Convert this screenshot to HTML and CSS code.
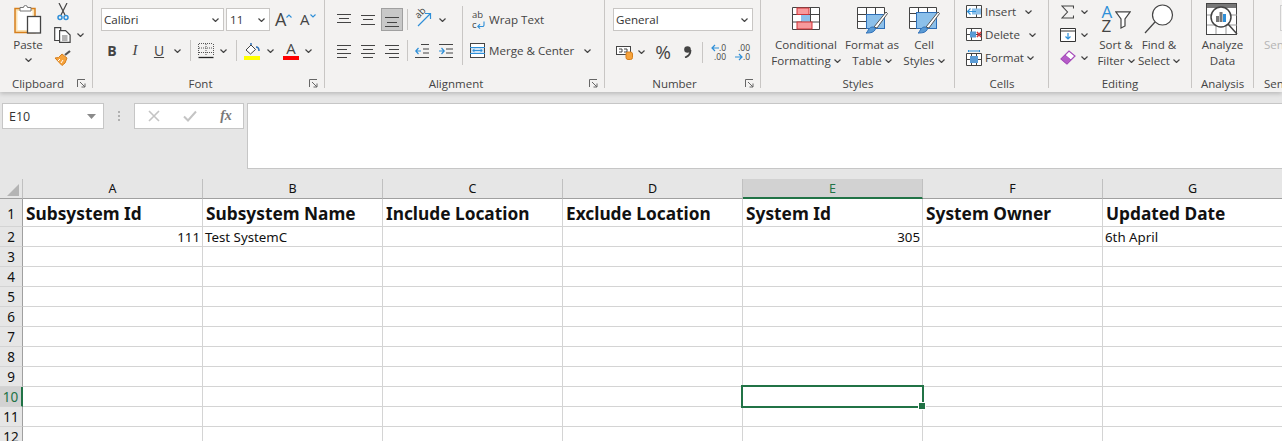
FILE: index.html
```html
<!DOCTYPE html>
<html lang="en">
<head>
    <meta charset="UTF-8">
    <title>Book1 - Excel</title>
    <link rel="stylesheet" href="styles.css">
</head>
<body>
    <svg class="defs" width="0" height="0">
        <symbol id="chev" viewBox="0 0 7 4"><path d="M.5.5l3 3 3-3" fill="none" stroke="#444" stroke-width="1.2"/></symbol>
    </svg>

    <div class="ribbon">
        <!-- clipboard -->
        <div class="group group-clipboard">
            <div class="group-body body-row">
                <div class="big paste-btn">
                    <div class="big-icon">
                        <svg class="up-1" width="28" height="30" viewBox="0 0 28 30"><rect x="1" y="4.500" width="20" height="24" fill="#fbe3b5" stroke="#d67f1c" stroke-width="1.500"/><rect x="3.500" y="7" width="15" height="19" fill="#fff"/><path d="M6 7V3.500h3.500a2 2 0 0 1 4 0H17V7z" fill="#fff" stroke="#777"/><rect x="13.500" y="12.500" width="13" height="16.500" fill="#fff" stroke="#444" stroke-width="1.300"/></svg>
                    </div>
                    <div>Paste</div>
                    <svg class="chev-big" width="7" height="4"><use href="#chev"/></svg>
                </div>
                <div class="small-col">
                    <div class="small-row">
                        <svg width="12" height="18" viewBox="0 0 12 18"><path d="M2 0l6 12M10 0L4 12" stroke="#444" stroke-width="1.200" fill="none"/><circle cx="3" cy="14.500" r="2" fill="none" stroke="#2e8fd8" stroke-width="1.500"/><circle cx="9" cy="14.500" r="2" fill="none" stroke="#2e8fd8" stroke-width="1.500"/></svg>
                    </div>
                    <div class="small-row">
                        <svg width="17" height="16" viewBox="0 0 17 16"><path d="M5 13.500H.7V.7h6V3" fill="#fff" stroke="#444" stroke-width="1.200"/><path d="M5.600 3.600h6l4.500 4.500v7.300H5.600z" fill="#fff" stroke="#444" stroke-width="1.200"/><path d="M8 9h5.500M8 11h5.500M8 13h5.500" stroke="#666"/></svg>
                        <svg class="chev-copy" width="7" height="4"><use href="#chev"/></svg>
                    </div>
                    <div class="small-row">
                        <svg width="17" height="16" viewBox="0 0 17 16"><path d="M11 5l5-4" stroke="#555" stroke-width="2.200"/><path d="M8 4l5 4-2 5-3 2.500L1 8l3.500-.5z" fill="#f6a33c" stroke="#d67f1c"/><path d="M6 9l-2 2M9 10l-2 3" stroke="#fff"/></svg>
                    </div>
                </div>
            </div>
            <div class="group-label has-launcher">
                <span>Clipboard</span>
                <svg class="launcher" width="9" height="9" viewBox="0 0 9 9"><path d="M.5 8V.5H8M3 3l5 5M8 4.500V8H4.500" fill="none" stroke="#666"/></svg>
            </div>
        </div>

        <!-- font -->
        <div class="group group-font">
            <div class="group-body stacked">
                <div class="font-top">
                    <div class="select select-font"><span>Calibri</span><svg width="7" height="4"><use href="#chev"/></svg></div>
                    <div class="select select-size"><span>11</span><svg width="7" height="4"><use href="#chev"/></svg></div>
                    <div class="grow-a">A<svg class="caret" width="6" height="4" viewBox="0 0 6 4"><path d="M.5 3.500L3 1l2.500 2.500" fill="none" stroke="#2e8fd8" stroke-width="1.100"/></svg></div>
                    <div class="shrink-a">A<svg class="caret" width="6" height="4" viewBox="0 0 6 4"><path d="M.5.500L3 3 5.500.5" fill="none" stroke="#2e8fd8" stroke-width="1.100"/></svg></div>
                </div>
                <div class="tool-row font-tools">
                    <span class="t-b">B</span>
                    <span class="t-i">I</span>
                    <span class="t-u">U</span>
                    <svg width="7" height="4"><use href="#chev"/></svg>
                    <i class="sep"></i>
                    <svg width="16" height="16" viewBox="0 0 16 16"><path d="M1 .5h14M1 5h14M1 9.500h14M.5 1v12M8 1v12M15.500 1v12" stroke="#555" stroke-dasharray="1 1" fill="none"/><path d="M.5 14.500h15" stroke="#222" stroke-width="1.300"/></svg>
                    <svg width="7" height="4"><use href="#chev"/></svg>
                    <i class="sep"></i>
                    <svg width="16" height="18" viewBox="0 0 16 18"><path d="M2 8l5-5 4.500 4.500-5 4.500z" fill="#fff" stroke="#444"/><path d="M7 3V1M12 5c2 0 3 1 3 4" stroke="#2e6fb8" stroke-width="1.500" fill="none"/><rect y="14" width="16" height="4" fill="#ffff00"/></svg>
                    <svg width="7" height="4"><use href="#chev"/></svg>
                    <span class="t-color">A<i></i></span>
                    <svg width="7" height="4"><use href="#chev"/></svg>
                </div>
            </div>
            <div class="group-label has-launcher">
                <span>Font</span>
                <svg class="launcher" width="9" height="9" viewBox="0 0 9 9"><path d="M.5 8V.5H8M3 3l5 5M8 4.500V8H4.500" fill="none" stroke="#666"/></svg>
            </div>
        </div>

        <!-- alignment -->
        <div class="group group-align">
            <div class="group-body body-row">
                <div class="align-left">
                    <div class="tool-row align-row1">
                        <svg width="14" height="16" viewBox="0 0 14 16"><path d="M0 2.500h14M2 6.500h10M0 10.500h14" stroke="#444"/></svg>
                        <svg width="14" height="16" viewBox="0 0 14 16"><path d="M0 3.500h14M2 7.500h10M0 12.500h14" stroke="#444"/></svg>
                        <div class="tool-on"><svg width="14" height="16" viewBox="0 0 14 16"><path d="M0 5.500h14M2 10.500h10M0 14.500h14" stroke="#444"/></svg></div>
                        <i class="sep"></i>
                        <div class="orient"><span>ab</span><svg width="17" height="17" viewBox="0 0 17 17"><path d="M3 15L15 3M10 2.500h5.500V8" fill="none" stroke="#2e8fd8" stroke-width="1.200"/></svg></div>
                        <svg width="7" height="4"><use href="#chev"/></svg>
                    </div>
                    <div class="tool-row align-row2">
                        <svg width="14" height="14" viewBox="0 0 14 14"><path d="M0 1.500h14M0 5.500h10M0 9.500h14M0 13.500h10" stroke="#444"/></svg>
                        <svg width="14" height="14" viewBox="0 0 14 14"><path d="M0 1.500h14M2 5.500h10M0 9.500h14M2 13.500h10" stroke="#444"/></svg>
                        <svg width="14" height="14" viewBox="0 0 14 14"><path d="M0 1.500h14M4 5.500h10M0 9.500h14M4 13.500h10" stroke="#444"/></svg>
                        <i class="sep"></i>
                        <svg width="14" height="14" viewBox="0 0 14 14"><path d="M6 .5h8M8 5h6M8 9h6M0 13.500h14" stroke="#444"/><path d="M6 7H.8M3.500 4L.8 7l2.700 3" fill="none" stroke="#2e8fd8" stroke-width="1.200"/></svg>
                        <svg width="14" height="14" viewBox="0 0 14 14"><path d="M0 .5h14M7 5h7M7 9h7M0 13.500h14" stroke="#444"/><path d="M0 7h5.200M2.500 4l2.700 3-2.700 3" fill="none" stroke="#2e8fd8" stroke-width="1.200"/></svg>
                    </div>
                </div>
                <i class="sep sep-tall"></i>
                <div class="align-right">
                    <div class="wrap-row">
                        <span class="wrap-icon"><span>ab</span><span>c</span><svg width="8" height="8" viewBox="0 0 8 8"><path d="M7 .5V4a1.500 1.500 0 0 1-1.500 1.500H1M3 3.200L.8 5.500 3 7.600" fill="none" stroke="#2e8fd8" stroke-width="1.100"/></svg></span>
                        <span>Wrap Text</span>
                    </div>
                    <div class="merge-row">
                        <svg width="15" height="15" viewBox="0 0 15 15"><rect x=".5" y=".5" width="14" height="14" fill="#fff" stroke="#444"/><rect x="1" y="4" width="13" height="7" fill="#cfe4f6"/><path d="M0 4.500h15M0 10.500h15" stroke="#2e8fd8"/><path d="M3 7.500h9M4.500 5.800L3 7.500l1.500 1.700M10.500 5.800L12 7.500l-1.500 1.700" fill="none" stroke="#2e8fd8"/></svg>
                        <span>Merge &amp; Center</span>
                        <svg class="chev-merge" width="7" height="4"><use href="#chev"/></svg>
                    </div>
                </div>
            </div>
            <div class="group-label has-launcher">
                <span>Alignment</span>
                <svg class="launcher" width="9" height="9" viewBox="0 0 9 9"><path d="M.5 8V.5H8M3 3l5 5M8 4.500V8H4.500" fill="none" stroke="#666"/></svg>
            </div>
        </div>

        <!-- number -->
        <div class="group group-number">
            <div class="group-body stacked">
                <div class="select select-number"><span>General</span><svg width="7" height="4"><use href="#chev"/></svg></div>
                <div class="tool-row number-tools">
                    <svg width="17" height="16" viewBox="0 0 17 16"><rect x=".5" y="2.500" width="14" height="8" fill="#fff" stroke="#444"/><path d="M3 5h3v3H3M8 5h3v3H8" fill="none" stroke="#444"/><rect x="10" y="8" width="6.500" height="7.500" rx="2" fill="#f6a33c" stroke="#d67f1c"/></svg>
                    <svg width="7" height="4"><use href="#chev"/></svg>
                    <span class="t-pct">%</span>
                    <svg width="9" height="12" viewBox="0 0 9 12"><circle cx="4.500" cy="3.500" r="3.300" fill="#444"/><path d="M7.500 4C7.500 8 5 10.500 2 11.500" fill="none" stroke="#444" stroke-width="1.800"/></svg>
                    <i class="sep"></i>
                    <span class="dec"><svg width="8" height="8" viewBox="0 0 8 8"><path d="M8 4H1M4 1L1 4l3 3" fill="none" stroke="#2e8fd8" stroke-width="1.200"/></svg><b>.0</b><b class="dec-low">.00</b></span>
                    <span class="dec"><b class="dec-top">.00</b><svg width="8" height="8" viewBox="0 0 8 8"><path d="M0 4h7M4 1l3 3-3 3" fill="none" stroke="#2e8fd8" stroke-width="1.200"/></svg><b>.0</b></span>
                </div>
            </div>
            <div class="group-label has-launcher">
                <span>Number</span>
                <svg class="launcher" width="9" height="9" viewBox="0 0 9 9"><path d="M.5 8V.5H8M3 3l5 5M8 4.500V8H4.500" fill="none" stroke="#666"/></svg>
            </div>
        </div>

        <!-- styles -->
        <div class="group group-styles">
            <div class="group-body body-row">
                <div class="big btn-cond">
                    <div class="big-icon">
                        <svg class="down-2" width="28" height="23" viewBox="0 0 28 23"><path d="M.5.5h27v22H.5zM.5 7.500h27M.5 15h27M9.500.5v22M18.500.5v22" fill="#fff" stroke="#444"/><rect x="5" y="1" width="12" height="6.500" fill="#f79a9c" stroke="#d13438"/><rect x="9" y="8" width="9" height="6.500" fill="#8cc0ea"/><rect x="5" y="15" width="15" height="7" fill="#f79a9c" stroke="#d13438"/></svg>
                    </div>
                    <div>Conditional</div>
                    <div>Formatting <svg width="7" height="4"><use href="#chev"/></svg></div>
                </div>
                <div class="big btn-table">
                    <div class="big-icon">
                        <svg class="down-2" width="31" height="27" viewBox="0 0 31 27"><path d="M.5.500h27v21H.5zM.5 7.500h27M.5 14.500h27M9.500.5v21M18.500.5v21" fill="#fff" stroke="#444"/><rect x="9.500" y="7.500" width="18" height="14" fill="#8cc0ea" stroke="#2e6fb8"/><path d="M17 20L29 5l1.500 1.500L20 21z" fill="#fff" stroke="#555"/><path d="M9 26c2-1 2-5 6-6 3 0 4 2 3 3-2 3-6 3-9 3z" fill="#5a9bd5" stroke="#2e6fb8"/></svg>
                    </div>
                    <div>Format as</div>
                    <div>Table <svg width="7" height="4"><use href="#chev"/></svg></div>
                </div>
                <div class="big btn-cell">
                    <div class="big-icon">
                        <svg class="down-2" width="31" height="27" viewBox="0 0 31 27"><path d="M.5.500h27v21H.5zM.5 6.500h27M.5 14.500h27M9.500.5v21M18.500.5v21" fill="#fff" stroke="#444"/><rect x="7.500" y="5.500" width="20" height="16" fill="#8cc0ea" stroke="#2e6fb8"/><path d="M17 20L29 5l1.500 1.500L20 21z" fill="#fff" stroke="#555"/><path d="M9 26c2-1 2-5 6-6 3 0 4 2 3 3-2 3-6 3-9 3z" fill="#5a9bd5" stroke="#2e6fb8"/></svg>
                    </div>
                    <div>Cell</div>
                    <div>Styles <svg width="7" height="4"><use href="#chev"/></svg></div>
                </div>
            </div>
            <div class="group-label"><span>Styles</span></div>
        </div>

        <!-- cells -->
        <div class="group group-cells">
            <div class="group-body">
                <div class="cell-row">
                    <svg width="16" height="13" viewBox="0 0 16 13"><path d="M.5.500h15v12H.5zM.5 6.500h15M10.500.5v12" fill="#fff" stroke="#444"/><rect x="6" y="3.500" width="9" height="6" fill="#8cc0ea"/><path d="M10 6.500H1.500M4.500 3.500l-3 3 3 3" fill="none" stroke="#2e8fd8" stroke-width="1.200"/></svg>
                    <span>Insert</span>
                    <svg class="chev-insert" width="7" height="4"><use href="#chev"/></svg>
                </div>
                <div class="cell-row">
                    <svg width="16" height="13" viewBox="0 0 16 13"><path d="M.5.500h15v12H.5zM.5 6.500h15M5.500.5v12" fill="#fff" stroke="#444"/><rect x="4" y="3.500" width="6" height="6" fill="#5a9bd5"/><path d="M11 4l4 5M15 4l-4 5" stroke="#d13438" stroke-width="1.500"/></svg>
                    <span>Delete</span>
                    <svg class="chev-insert" width="7" height="4"><use href="#chev"/></svg>
                </div>
                <div class="cell-row">
                    <svg width="16" height="16" viewBox="0 0 16 16"><path d="M.5 3.500h15v12H.5zM.5 9.500h15M5.500 3.500v12M10.500 3.500v12" fill="#fff" stroke="#444"/><rect x="4" y="6" width="8" height="7" fill="#5a9bd5"/><path d="M2.500 1h11M2.500 0v2M13.500 0v2" stroke="#2e8fd8"/></svg>
                    <span>Format</span>
                    <svg class="chev-format" width="7" height="4"><use href="#chev"/></svg>
                </div>
            </div>
            <div class="group-label"><span>Cells</span></div>
        </div>

        <!-- editing -->
        <div class="group group-editing">
            <div class="group-body body-row">
                <div class="edit-col">
                    <div class="edit-row">
                        <svg width="13" height="14" viewBox="0 0 13 14"><path d="M12.500 3.500V1H1l5.500 6L1 13h11.500v-2.500" fill="none" stroke="#444" stroke-width="1.100"/></svg>
                        <svg width="7" height="4"><use href="#chev"/></svg>
                    </div>
                    <div class="edit-row">
                        <svg width="16" height="14" viewBox="0 0 16 14"><path d="M.5.500h15v13H.5z" fill="#fff" stroke="#333"/><path d="M.5 3h15" stroke="#333"/><path d="M8 5v6M5.500 8.500L8 11l2.500-2.500" fill="none" stroke="#2e8fd8" stroke-width="1.200"/></svg>
                        <svg width="7" height="4"><use href="#chev"/></svg>
                    </div>
                    <div class="edit-row">
                        <svg width="16" height="15" viewBox="0 0 16 15"><path d="M1 9l8-8 6 5-8 8z" fill="#fff" stroke="#a64dba" stroke-width="1.200"/><path d="M1 9l4-4 6 5-4 4z" fill="#b55cc8" stroke="#a64dba"/></svg>
                        <svg width="7" height="4"><use href="#chev"/></svg>
                    </div>
                </div>
                <div class="big btn-sort">
                    <div class="big-icon">
                        <span class="sort-az"><b>A</b><b>Z</b></span>
                        <svg class="funnel" width="16" height="18" viewBox="0 0 16 18"><path d="M.8.800h14.400L10 8v7l-4 2V8z" fill="#fff" stroke="#444" stroke-width="1.200"/></svg>
                    </div>
                    <div>Sort &amp;</div>
                    <div>Filter <svg width="7" height="4"><use href="#chev"/></svg></div>
                </div>
                <div class="big btn-find">
                    <div class="big-icon">
                        <svg class="up-1" width="30" height="30" viewBox="0 0 30 30"><circle cx="18.500" cy="11" r="10" fill="#fff" stroke="#444" stroke-width="1.200"/><path d="M11 18L1 29" stroke="#444" stroke-width="1.200"/></svg>
                    </div>
                    <div>Find &amp;</div>
                    <div>Select <svg width="7" height="4"><use href="#chev"/></svg></div>
                </div>
            </div>
            <div class="group-label"><span>Editing</span></div>
        </div>

        <!-- analysis -->
        <div class="group group-analysis">
            <div class="group-body">
                <div class="big">
                    <div class="big-icon">
                        <svg class="up-2" width="33" height="33" viewBox="0 0 33 33"><rect x=".5" y=".5" width="30" height="31" fill="#fff" stroke="#444"/><rect x="1" y="1" width="29" height="4" fill="#777"/><path d="M1 12h30M1 22h30M10 5v26M20 5v26" stroke="#999"/><circle cx="15" cy="14" r="10" fill="#fff" stroke="#444" stroke-width="1.500"/><rect x="10" y="13" width="3" height="6" fill="#777"/><rect x="13.500" y="9" width="3" height="10" fill="#777"/><rect x="17" y="11" width="3" height="8" fill="#2e8fd8"/><path d="M22 21l9 10" stroke="#444" stroke-width="1.500"/></svg>
                    </div>
                    <div>Analyze</div>
                    <div>Data</div>
                </div>
            </div>
            <div class="group-label"><span>Analysis</span></div>
        </div>

        <!-- sensitivity, cut off by the window -->
        <div class="group group-sens">
            <div class="group-body">
                <div class="big sens-btn">
                    <div class="big-icon"><i class="sens-icon"></i></div>
                    <div>Sensitivity</div>
                </div>
            </div>
            <div class="group-label"><span>Sensitivity</span></div>
        </div>
    </div>

    <div class="formula-area">
        <div class="name-box">
            <span>E10</span>
            <svg width="9" height="5" viewBox="0 0 9 5"><path d="M0 0h9L4.500 5z" fill="#8a8a8a"/></svg>
        </div>
        <div class="grip"><i></i><i></i><i></i></div>
        <div class="fx-buttons">
            <svg width="12" height="12" viewBox="0 0 12 12"><path d="M1 1l10 10M11 1L1 11" stroke="#c4c4c4" stroke-width="1.600"/></svg>
            <svg width="14" height="12" viewBox="0 0 14 12"><path d="M1 6.500L5 10.500 13 1.500" fill="none" stroke="#c4c4c4" stroke-width="2"/></svg>
            <span class="fx">fx</span>
        </div>
        <div class="formula-input"></div>
    </div>

    <div class="sheet">
        <div class="row col-heads">
            <div class="corner"><svg width="12" height="12" viewBox="0 0 12 12"><path d="M12 0v12H0z" fill="#b4b4b4"/></svg></div>
            <div class="col-head">A</div>
            <div class="col-head">B</div>
            <div class="col-head">C</div>
            <div class="col-head">D</div>
            <div class="col-head col-active">E</div>
            <div class="col-head">F</div>
            <div class="col-head">G</div>
        </div>
        <div class="row row-title">
            <div class="row-head">1</div>
            <div class="cell">Subsystem Id</div>
            <div class="cell">Subsystem Name</div>
            <div class="cell">Include Location</div>
            <div class="cell">Exclude Location</div>
            <div class="cell">System Id</div>
            <div class="cell">System Owner</div>
            <div class="cell">Updated Date</div>
        </div>
        <div class="row">
            <div class="row-head">2</div>
            <div class="cell num">111</div>
            <div class="cell">Test SystemC</div>
            <div class="cell"></div>
            <div class="cell"></div>
            <div class="cell num">305</div>
            <div class="cell"></div>
            <div class="cell">6th April</div>
        </div>
        <div class="row"><div class="row-head">3</div><div class="cell"></div><div class="cell"></div><div class="cell"></div><div class="cell"></div><div class="cell"></div><div class="cell"></div><div class="cell"></div></div>
        <div class="row"><div class="row-head">4</div><div class="cell"></div><div class="cell"></div><div class="cell"></div><div class="cell"></div><div class="cell"></div><div class="cell"></div><div class="cell"></div></div>
        <div class="row"><div class="row-head">5</div><div class="cell"></div><div class="cell"></div><div class="cell"></div><div class="cell"></div><div class="cell"></div><div class="cell"></div><div class="cell"></div></div>
        <div class="row"><div class="row-head">6</div><div class="cell"></div><div class="cell"></div><div class="cell"></div><div class="cell"></div><div class="cell"></div><div class="cell"></div><div class="cell"></div></div>
        <div class="row"><div class="row-head">7</div><div class="cell"></div><div class="cell"></div><div class="cell"></div><div class="cell"></div><div class="cell"></div><div class="cell"></div><div class="cell"></div></div>
        <div class="row"><div class="row-head">8</div><div class="cell"></div><div class="cell"></div><div class="cell"></div><div class="cell"></div><div class="cell"></div><div class="cell"></div><div class="cell"></div></div>
        <div class="row"><div class="row-head">9</div><div class="cell"></div><div class="cell"></div><div class="cell"></div><div class="cell"></div><div class="cell"></div><div class="cell"></div><div class="cell"></div></div>
        <div class="row"><div class="row-head row-active">10</div><div class="cell"></div><div class="cell"></div><div class="cell"></div><div class="cell"></div><div class="cell cell-selected"><i class="selection"><i class="fill-handle"></i></i></div><div class="cell"></div><div class="cell"></div></div>
        <div class="row"><div class="row-head">11</div><div class="cell"></div><div class="cell"></div><div class="cell"></div><div class="cell"></div><div class="cell"></div><div class="cell"></div><div class="cell"></div></div>
        <div class="row"><div class="row-head">12</div><div class="cell"></div><div class="cell"></div><div class="cell"></div><div class="cell"></div><div class="cell"></div><div class="cell"></div><div class="cell"></div></div>
    </div>
</body>
</html>
```
FILE: styles.css
```css
* {
    margin: 0;
    padding: 0;
    box-sizing: border-box;
}
html, body {
    height: 100%;
    overflow: hidden;
}
body {
    background-color: #e6e6e6;
    font-family: "Open Sans", "Noto Sans", sans-serif;
    font-size: 11.6px;
    color: #444;
}
i {
    display: block;
}
.defs {
    display: block;
    height: 0;
}

/* ribbon */
.ribbon {
    display: flex;
    height: 92px;
    background-color: #f3f2f1;
    box-shadow: 0 2px 4px rgba(0, 0, 0, 0.18);
    position: relative;
    white-space: nowrap;
    overflow: hidden;
}
.group {
    display: flex;
    flex-direction: column;
    flex: none;
    height: 88px;
    border-right: 1px solid #c8c6c4;
}
.group-clipboard { width: 93px; }
.group-font { width: 232px; padding-left: 8px; }
.group-align { width: 280px; padding-left: 7px; }
.group-number { width: 156px; padding-left: 8px; }
.group-styles { width: 194px; padding-left: 11px; }
.group-cells { width: 94px; padding-left: 11px; }
.group-editing { width: 143px; padding-left: 10px; }
.group-analysis { width: 62px; }
.group-sens { width: 60px; border-right: none; padding-left: 10px; }

.group-body {
    height: 76px;
    flex: none;
}
.body-row {
    display: flex;
}
.stacked {
    padding-top: 8px;
    display: flex;
    flex-direction: column;
    gap: 8px;
}
.group-label {
    display: flex;
    height: 16px;
    line-height: 16px;
    justify-content: center;
    margin-bottom: -4px;
    font-size: 11.5px;
    position: relative;
}
.group-font .group-label,
.group-align .group-label,
.group-number .group-label {
    margin-left: -8px;
}
.group-styles .group-label,
.group-cells .group-label,
.group-editing .group-label {
    margin-left: -10px;
}
.group-sens .group-label {
    justify-content: flex-start;
}
.has-launcher span {
    flex: 1;
    text-align: center;
}
.launcher {
    width: 16px;
    flex: none;
    padding: 3px 6px 4px 1px;
    height: 16px;
    overflow: visible;
}

.sep {
    width: 1px;
    height: 21px;
    background-color: #c8c6c4;
}
.sep-tall {
    height: 59px;
    margin: 6px 0 0 3px;
    flex: none;
}
.tool-row {
    display: grid;
    align-items: center;
    justify-items: center;
    height: 23px;
}

/* big buttons, icon above two lines of text */
.big {
    display: flex;
    flex-direction: column;
    align-items: center;
    line-height: 16px;
    padding-top: 5px;
}
.big-icon {
    display: flex;
    justify-content: center;
    align-items: flex-start;
    height: 32px;
}
.big svg {
    flex: none;
}
.big > div > svg {
    vertical-align: 2px;
}
.down-2 { margin-top: 2px; }
.up-1 { margin-top: -1px; }
.up-2 { margin-top: -2px; }

/* clipboard */
.paste-btn {
    width: 54px;
    flex: none;
    padding-left: 2px;
}
.chev-big {
    margin-top: 5px;
}
.small-col {
    width: 36px;
}
.small-row {
    display: flex;
    align-items: center;
    height: 23px;
}
.small-row:first-child {
    padding-left: 3px;
}
.chev-copy {
    margin-left: 6px;
}

/* selects */
.select {
    display: flex;
    justify-content: space-between;
    align-items: center;
    height: 23px;
    background-color: #fff;
    border: 1px solid #c8c6c4;
    padding: 0 4px 0 2px;
    color: #333;
    font-size: 11.6px;
}
.select-font { width: 123px; }
.select-size { width: 44px; margin-left: 2px; padding-left: 3px; }
.select-number { width: 140px; }
.font-top {
    display: flex;
    align-items: center;
}
.grow-a, .shrink-a {
    display: flex;
    line-height: 23px;
    color: #444;
}
.grow-a { margin-left: 5px; width: 25px; font-size: 18px; }
.shrink-a { font-size: 15px; width: 16px; }
.caret {
    margin-top: 6px;
    flex: none;
}

/* font tools */
.font-tools {
    grid-template-columns: 22px 24px 24px 12px 14px 17px 18px 8px 24px 12px 30px 4px;
    font-size: 14px;
}
.t-b { font-weight: bold; font-size: 14px; }
.t-i { font-style: italic; font-family: "Liberation Serif", serif; font-size: 15px; }
.t-u { text-decoration: underline; font-size: 14px; }
.t-color {
    display: flex;
    flex-direction: column;
    align-items: center;
    width: 16px;
    line-height: 13px;
    font-size: 15px;
}
.t-color i {
    width: 16px;
    height: 4px;
    background-color: #ff0000;
    margin-top: 1px;
}

/* alignment */
.align-left {
    width: 127px;
    flex: none;
    padding-top: 8px;
}
.align-row1 {
    grid-template-columns: 24px 24px 24px 6px 28px 8px;
}
.align-row2 {
    grid-template-columns: 24px 24px 24px 6px 24px 24px;
    margin-top: 8px;
}
.tool-on {
    display: flex;
    justify-content: center;
    width: 22px;
    height: 23px;
    align-items: center;
    background-color: #c8c8c8;
    border: 1px solid #a0a0a0;
}
.orient {
    display: flex;
    align-items: center;
    width: 18px;
}
.orient span {
    width: 0;
    font-size: 9.5px;
    transform: translate(1px, -3px) rotate(-45deg);
}
.align-right {
    padding: 8px 0 0 7px;
}
.wrap-row, .merge-row {
    display: flex;
    align-items: center;
    height: 23px;
}
.merge-row {
    margin-top: 8px;
}
.merge-row > svg:first-child {
    margin-right: 4px;
}
.wrap-icon {
    display: flex;
    flex-wrap: wrap;
    align-items: center;
    width: 15px;
    margin: 0 2px 0 2px;
    font-size: 9.5px;
    line-height: 10px;
}
.wrap-icon span:first-child {
    width: 100%;
}
.chev-merge {
    margin-left: 10px;
}

/* number */
.number-tools {
    grid-template-columns: 22px 12px 32px 17px 12px 19px 29px;
}
.t-pct { font-size: 19px; }
.dec {
    display: flex;
    flex-wrap: wrap;
    align-items: center;
    justify-content: flex-end;
    width: 17px;
    line-height: 9px;
    font-size: 8.5px;
}
.dec b {
    font-weight: normal;
}
.dec-low, .dec-top {
    width: 100%;
    text-align: right;
}

/* styles */
.btn-cond { width: 68px; flex: none; }
.btn-table { width: 64px; flex: none; }
.btn-cell { width: 40px; flex: none; }

/* cells */
.cell-row {
    display: flex;
    align-items: center;
    height: 23px;
}
.cell-row > svg:first-child {
    margin-right: 3px;
}
.chev-insert {
    margin-left: 9px;
}
.chev-format {
    margin-left: 3px;
}

/* editing */
.edit-col {
    width: 36px;
    flex: none;
}
.edit-row {
    display: grid;
    grid-template-columns: 17px 16px;
    justify-items: center;
    align-items: center;
    height: 23px;
}
.btn-sort { width: 42px; flex: none; }
.btn-find { width: 44px; flex: none; }
.sort-az {
    display: flex;
    flex-direction: column;
    font-size: 17px;
    line-height: 14px;
    width: 13px;
}
.sort-az b {
    font-weight: normal;
}
.sort-az b:first-child {
    color: #2e8fd8;
}
.funnel {
    margin-top: 6px;
}
.sens-btn {
    align-items: flex-start;
    color: #b5b5b5;
}
.sens-icon {
    width: 30px;
    height: 26px;
    margin-left: 16px;
    border: 1px solid #d0d0d0;
}

/* formula bar */
.formula-area {
    display: flex;
    align-items: flex-start;
    height: 87px;
    padding: 11px 0 0 2px;
}
.name-box {
    display: flex;
    justify-content: space-between;
    align-items: center;
    width: 102px;
    height: 26px;
    background-color: #fff;
    border: 1px solid #c6c6c6;
    padding: 0 7px 0 6px;
    font-size: 12.5px;
    color: #333;
}
.grip {
    display: flex;
    flex-direction: column;
    gap: 2px;
    width: 30px;
    align-items: center;
    padding-top: 8px;
}
.grip i {
    width: 2px;
    height: 2px;
    background-color: #b0b0b0;
}
.fx-buttons {
    display: grid;
    grid-template-columns: 37px 36px 36px;
    align-items: center;
    justify-items: center;
    width: 110px;
    height: 26px;
    background-color: #fff;
    border: 1px solid #c6c6c6;
}
.fx {
    font-family: "Liberation Serif", serif;
    font-style: italic;
    font-weight: bold;
    font-size: 14px;
    color: #777;
}
.formula-input {
    flex: 1;
    height: 66px;
    margin-left: 3px;
    background-color: #fff;
    border: 1px solid #c6c6c6;
    border-right: none;
}

/* sheet */
.sheet {
    background-color: #fff;
    font-family: "Noto Sans", sans-serif;
    color: #111;
}
.row {
    display: flex;
    height: 20px;
    width: 1283px;
}
.col-heads {
    background-color: #e6e6e6;
}
.row-title {
    height: 28px;
}
.corner {
    display: flex;
    justify-content: flex-end;
    width: 23px;
    padding: 5px 3px 0 0;
    border-right: 1px solid #c0c0c0;
    border-bottom: 1px solid #a0a0a0;
}
.col-head {
    width: 180px;
    text-align: center;
    line-height: 20px;
    font-size: 12.5px;
    border-right: 1px solid #c0c0c0;
    border-bottom: 1px solid #a0a0a0;
}
.col-active {
    background-color: #d2d2d2;
    color: #217346;
    border-bottom: 2px solid #217346;
}
.row-head {
    width: 23px;
    flex: none;
    background-color: #e6e6e6;
    border-right: 1px solid #a0a0a0;
    border-bottom: 1px solid #d4d4d4;
    text-align: center;
    font-size: 13.5px;
    line-height: 20px;
}
.row-title .row-head {
    line-height: 30px;
}
.row-active {
    background-color: #d2d2d2;
    color: #217346;
    border-right: 2px solid #217346;
}
.cell {
    width: 180px;
    flex: none;
    padding: 0 2px;
    border-right: 1px solid #d4d4d4;
    border-bottom: 1px solid #d4d4d4;
    font-size: 13.3px;
    line-height: 20px;
}
.num {
    text-align: right;
}
.row-title .cell {
    padding-left: 3px;
    font-size: 17.3px;
    font-weight: bold;
    line-height: 29px;
}
.cell-selected {
    position: relative;
}
.selection {
    position: absolute;
    left: -2px;
    top: -2px;
    width: 183px;
    height: 23px;
    border: 2px solid #217346;
}
.fill-handle {
    position: absolute;
    right: -3px;
    bottom: -3px;
    width: 6px;
    height: 6px;
    background-color: #217346;
    outline: 1px solid #fff;
}
```
